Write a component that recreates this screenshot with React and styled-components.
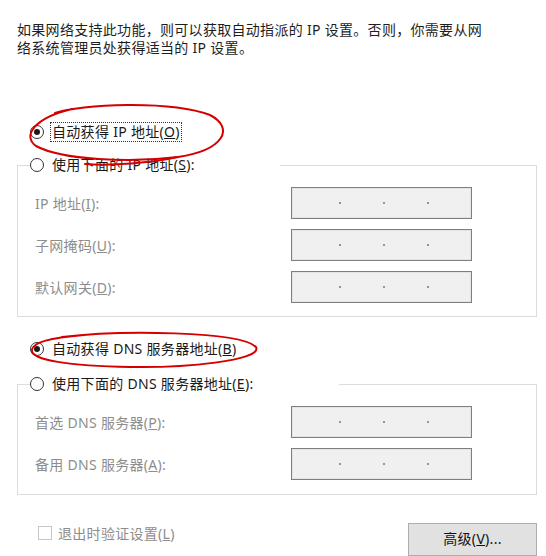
import React from "react";
import styled, { createGlobalStyle } from "styled-components";

const GlobalStyle = createGlobalStyle`
  html, body {
    margin: 0;
    padding: 0;
    background: #ffffff;
    overflow: hidden;
  }
  body {
    font-family: "Noto Sans", "Noto Sans CJK SC", sans-serif;
    font-size: 14px;
    letter-spacing: 0.3px;
    color: #1a1a1a;
  }
`;

const Page = styled.div`
  position: relative;
  width: 546px;
  height: 556px;
  box-sizing: border-box;
  padding: 21px 9px 0 17px;
`;

const Intro = styled.p`
  margin: 0;
  font-size: 14px;
  line-height: 18px;
  color: #1e1e1e;
`;

const OptionRow = styled.div`
  display: flex;
  align-items: center;
  height: 20px;
  margin-top: ${(p) => p.$top}px;
  padding-left: 13px;
`;

const Radio = styled.span`
  box-sizing: border-box;
  width: 14px;
  height: 14px;
  border: 1px solid #333333;
  border-radius: 50%;
  background: #ffffff;
  display: inline-flex;
  align-items: center;
  justify-content: center;
  margin-right: 6px;
  flex: none;

  &::after {
    content: "";
    width: 6px;
    height: 6px;
    border-radius: 50%;
    background: ${(p) => (p.$checked ? "#1a1a1a" : "transparent")};
  }
`;

const OptionText = styled.span`
  line-height: 18px;
  padding: 0 1px;
  border: 1px dotted ${(p) => (p.$focused ? "#333333" : "transparent")};
  color: #1a1a1a;
  white-space: nowrap;
`;

const Group = styled.fieldset`
  margin: ${(p) => p.$top}px 0 0;
  padding: ${(p) => p.$padTop}px 0 ${(p) => p.$padBottom}px 0;
  border: 1px solid #dcdcdc;
  min-width: 0;
`;

const Legend = styled.legend`
  box-sizing: border-box;
  width: ${(p) => p.$width}px;
  height: 20px;
  margin-left: 12px;
  padding: 0;
  display: flex;
  align-items: center;
  background: #ffffff;
`;

const Rows = styled.div`
  display: grid;
  row-gap: 10px;
  padding-left: 17px;
`;

const FieldRow = styled.div`
  display: grid;
  grid-template-columns: 256px 181px;
  align-items: center;
  height: 32px;
`;

const FieldLabel = styled.span`
  color: #8d8d8d;
  white-space: nowrap;
`;

const IpBox = styled.div`
  box-sizing: border-box;
  height: 32px;
  border: 1px solid #7f7f7f;
  box-shadow: inset 0 0 0 1px #e4e4e4;
  background: #f0f0f0;
  display: flex;
  align-items: center;
  justify-content: center;
  gap: 42px;
  padding-left: 4px;
`;

const Dot = styled.span`
  width: 2px;
  height: 2px;
  background: #777777;
  border-radius: 50%;
`;

const Footer = styled.div`
  display: flex;
  justify-content: space-between;
  align-items: flex-start;
  margin-top: 28px;
  padding-left: 21px;
`;

const CheckRow = styled.div`
  display: flex;
  align-items: center;
  height: 20px;
  color: #8d8d8d;
`;

const CheckBox = styled.span`
  box-sizing: border-box;
  width: 14px;
  height: 14px;
  border: 1px solid #c6c6c6;
  background: #ffffff;
  margin-right: 6px;
`;

const Button = styled.button`
  box-sizing: border-box;
  width: 129px;
  height: 33px;
  border: 1px solid #adadad;
  background: #e1e1e1;
  font-family: "Noto Sans", "Noto Sans CJK SC", sans-serif;
  font-size: 14px;
  letter-spacing: 0.3px;
  color: #111111;
  padding: 0 0 4px;
`;

const Marks = styled.svg`
  position: absolute;
  left: 0;
  top: 0;
  pointer-events: none;
`;

const IpField = ({ label, accel }) => (
  <FieldRow>
    <FieldLabel>
      {label}(<u>{accel}</u>):
    </FieldLabel>
    <IpBox>
      <Dot />
      <Dot />
      <Dot />
    </IpBox>
  </FieldRow>
);

export default function App() {
  return (
    <>
      <GlobalStyle />
      <Page>
        <Intro>
          如果网络支持此功能，则可以获取自动指派的 IP 设置。否则，你需要从网
          <br />
          络系统管理员处获得适当的 IP 设置。
        </Intro>

        <OptionRow $top={65}>
          <Radio $checked />
          <OptionText $focused>
            自动获得 IP 地址(<u>O</u>)
          </OptionText>
        </OptionRow>

        <Group $top={13} $padTop={12} $padBottom={13}>
          <Legend $width={250}>
            <Radio />
            <OptionText>
              使用下面的 IP 地址(<u>S</u>):
            </OptionText>
          </Legend>
          <Rows>
            <IpField label="IP 地址" accel="I" />
            <IpField label="子网掩码" accel="U" />
            <IpField label="默认网关" accel="D" />
          </Rows>
        </Group>

        <OptionRow $top={22}>
          <Radio $checked />
          <OptionText>
            自动获得 DNS 服务器地址(<u>B</u>)
          </OptionText>
        </OptionRow>

        <Group $top={15} $padTop={12} $padBottom={14}>
          <Legend $width={309}>
            <Radio />
            <OptionText>
              使用下面的 DNS 服务器地址(<u>E</u>):
            </OptionText>
          </Legend>
          <Rows>
            <IpField label="首选 DNS 服务器" accel="P" />
            <IpField label="备用 DNS 服务器" accel="A" />
          </Rows>
        </Group>

        <Footer>
          <CheckRow>
            <CheckBox />
            退出时验证设置(<u>L</u>)
          </CheckRow>
          <Button>
            高级(<u>V</u>)...
          </Button>
        </Footer>

        <Marks width="546" height="556" viewBox="0 0 546 556">
          <g fill="none" stroke="#d40000" strokeWidth="2" strokeLinecap="round">
            <path d="M55 113 C80 104 170 100 210 115 C235 128 224 150 178 157 C130 163 62 160 36 146 C22 136 34 118 72 109" />
            <path d="M178 157 C150 163 112 166 85 164" />
            <path d="M62 337 C120 330 240 331 256 347 C263 361 182 368 130 367 C70 366 30 360 32 350 C33 342 50 338 84 335" />
          </g>
        </Marks>
      </Page>
    </>
  );
}
